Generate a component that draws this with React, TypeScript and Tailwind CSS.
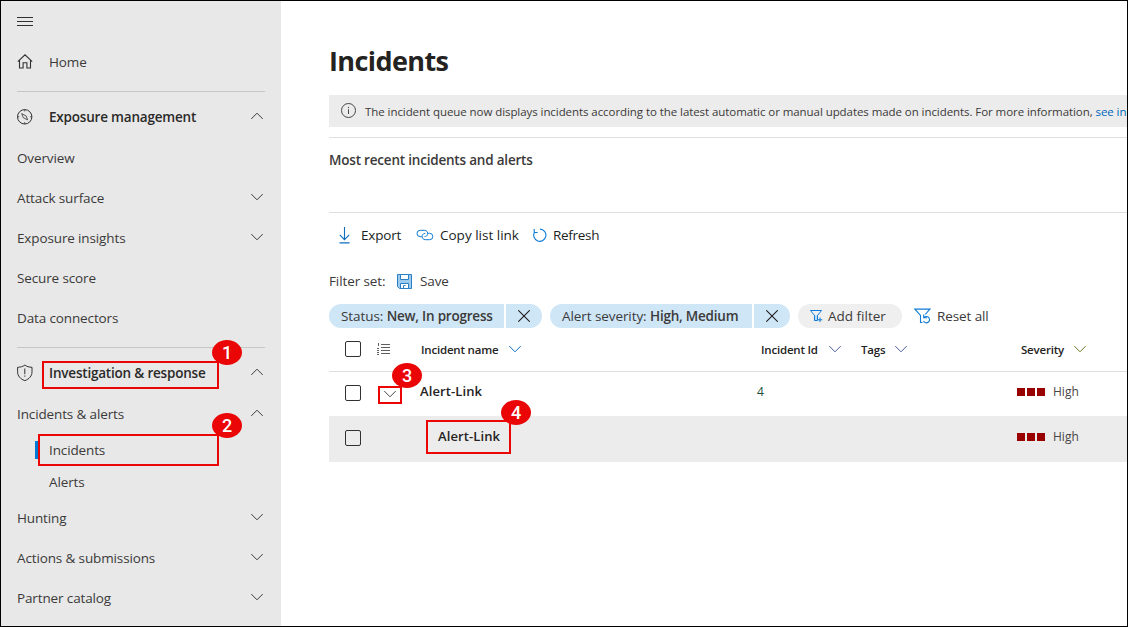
import type { ReactNode } from "react";

function Chevron({ up = false, className = "" }: { up?: boolean; className?: string }) {
  return (
    <svg width="12" height="8" viewBox="0 0 12 8" fill="none" stroke="currentColor" className={`shrink-0 ${className}`}>
      <path d={up ? "M0.3 6.9 6 1.2l5.7 5.7" : "M0.3 1.1 6 6.8l5.7-5.7"} />
    </svg>
  );
}

type NavRowProps = { label: string; chevron?: "up" | "down"; icon?: ReactNode; bold?: boolean };

function NavRow({ label, chevron, icon, bold }: NavRowProps) {
  return (
    <div className="flex h-10 shrink-0 items-center pr-[18px] pl-4">
      {icon && <span className="flex w-8 shrink-0 pb-px">{icon}</span>}
      <span className={`flex-1 ${bold ? "font-semibold tracking-[-0.2px] text-[#2b2a29]" : ""}`}>{label}</span>
      {chevron && <Chevron up={chevron === "up"} className="relative -top-px" />}
    </div>
  );
}

function Rule() {
  return <div className="mt-[9px] mr-4 mb-[5px] ml-4 h-px shrink-0 bg-[#c8c6c4]" />;
}

function HomeIcon() {
  return (
    <svg width="16" height="16" viewBox="0 0 16 16" fill="none" stroke="#323130" strokeWidth="1.1">
      <path d="M0.8 7.600 8 0.800 15.200 7.600M2.500 6.200v7.800h3.600V8.800h3.800v5.200h3.600V6.200" />
    </svg>
  );
}

function CompassIcon() {
  return (
    <svg width="16" height="16" viewBox="0 0 16 16" fill="none" stroke="#323130">
      <circle cx="7.7" cy="7.8" r="7.2" />
      <path d="M4.700 4.600l4.500 2.400 1.400 3.900-4.400-2.300z" strokeWidth="0.8" />
      <path d="M7.7 0.6v1.8M7.7 13.2V15M0.5 7.8h1.8M13.1 7.8h1.8" strokeWidth="0.8" />
    </svg>
  );
}

function ShieldIcon() {
  return (
    <svg width="16" height="18" viewBox="0 0 16 18" fill="none" stroke="#323130">
      <path d="M7.8 1.1C6 2.5 3.500 3.200 0.600 3.300v4.500c0 4.200 2.700 7.100 7.200 8.900 4.500-1.800 7.200-4.700 7.200-8.900V3.300C12.100 3.200 9.600 2.500 7.800 1.100z" />
      <path d="M7.800 4.500v5.700M7.800 11.500v1.200" />
    </svg>
  );
}

function Badge({ n, className }: { n: number; className: string }) {
  return (
    <span className={`absolute flex h-[25px] w-[30px] items-center justify-center rounded-[50%] bg-[#ea0606] font-['Roboto','Liberation_Sans',sans-serif] text-[18px] leading-none font-medium text-white ${className}`}>
      {n}
    </span>
  );
}

function Frame({ className }: { className: string }) {
  return <span className={`absolute border-2 border-[#ea0606] ${className}`} />;
}

function Checkbox() {
  return <span className="ml-4 block size-4 rounded-[2px] border border-[#323130] bg-white" />;
}

function Severity() {
  return (
    <div className="flex items-center pb-0.5">
      <span className="flex gap-0.5">
        <i className="size-2 bg-[#990000]" />
        <i className="size-2 bg-[#990000]" />
        <i className="size-2 bg-[#990000]" />
      </span>
      <span className="ml-2 text-[12px] text-[#484644]">High</span>
    </div>
  );
}

function FilterPill({ name, value, width }: { name: string; value: string; width: string }) {
  return (
    <div className="mr-2 flex h-6 gap-0.5">
      <div className={`flex items-center rounded-l-full bg-[#cfe6f7] pl-3 whitespace-pre ${width}`}>
        <span className="tracking-[-0.08px]">{name} </span>
        <b className="font-semibold tracking-[-0.22px]">{value}</b>
      </div>
      <div className="flex w-9 items-center justify-center rounded-r-full bg-[#cfe6f7]">
        <svg width="12" height="12" viewBox="0 0 12 12" stroke="#201f1e" strokeWidth="1.100">
          <path d="M0.300 0.300l11.400 11.400M11.700 0.300L0.300 11.700" />
        </svg>
      </div>
    </div>
  );
}

function Sidebar() {
  return (
    <nav className="flex w-[280px] shrink-0 flex-col bg-[#e8e8e8] tracking-[-0.13px]">
      <div className="flex h-[41px] shrink-0 items-center pl-4">
        <svg width="16" height="9" viewBox="0 0 16 9" stroke="#323130" shapeRendering="crispEdges">
          <path d="M0 0.500h16M0 4.500h16M0 8.500h16" />
        </svg>
      </div>
      <NavRow label="Home" icon={<HomeIcon />} />
      <Rule />
      <NavRow label="Exposure management" icon={<CompassIcon />} chevron="up" bold />
      <div className="mt-px flex flex-col">
        <NavRow label="Overview" />
        <NavRow label="Attack surface" chevron="down" />
        <NavRow label="Exposure insights" chevron="down" />
        <NavRow label="Secure score" />
        <NavRow label="Data connectors" />
      </div>
      <Rule />
      <NavRow label="Investigation & response" icon={<ShieldIcon />} chevron="up" bold />
      <div className="mt-px flex flex-col">
        <NavRow label="Incidents & alerts" chevron="up" />
        <div className="flex h-8 items-center pl-[34px]">
          <span className="mr-[11px] h-[18px] w-[3px] bg-[#0078d4]" />
          Incidents
        </div>
        <div className="flex h-8 items-center pl-12">Alerts</div>
        <NavRow label="Hunting" chevron="down" />
        <NavRow label="Actions & submissions" chevron="down" />
        <NavRow label="Partner catalog" chevron="down" />
      </div>
    </nav>
  );
}

function Toolbar() {
  return (
    <div className="flex h-[45px] items-center pb-px pl-2 tracking-[-0.2px] text-[#201f1e]">
      <svg width="14" height="17" viewBox="0 0 14 17" fill="none" stroke="#0f6cbd" strokeWidth="1.100">
        <path d="M7.500 0v12.500M2.800 7.900l4.700 4.700 4.700-4.700M2.500 15.900h10" />
      </svg>
      <span className="ml-[10px] w-[55px]">Export</span>
      <svg width="18" height="14" viewBox="0 0 18 14" fill="none" stroke="#0f7bd4">
        <path d="M5.800 8.700H4.200a3.200 3.200 0 0 1 0-6.400h4.300a3.200 3.200 0 0 1 3.100 4.100c-.4 1.300-1.500 2.200-3.100 2.200" />
        <path d="M12.200 5.300h1.400a3.200 3.200 0 0 1 0 6.400H9.300a3.200 3.200 0 0 1-3.100-4.100c.4-1.300 1.500-2.200 3.100-2.200" />
      </svg>
      <span className="ml-1.5 w-[93px] tracking-normal">Copy list link</span>
      <svg width="14" height="14" viewBox="0 0 14 14" fill="none" stroke="#0f7bd4" strokeWidth="1.100">
        <path d="M1.200 1v3.500h3.500M1.500 4.200A6.100 6.100 0 1 0 7 1.100" />
      </svg>
      <span className="ml-1.5 tracking-[-0.3px]">Refresh</span>
    </div>
  );
}

function Filters() {
  return (
    <>
      <div className="flex h-[46px] items-center tracking-[-0.1px]">
        <span className="w-[68px]">Filter set:</span>
        <svg width="15" height="15" viewBox="0 0 15 15" fill="none" stroke="#2b7fc4">
          <path d="M0.500 0.500h14v14H2.500l-2-2z" fill="#9ccbee" />
          <path d="M3.500 0.500h8v5h-8z" fill="#fff" />
          <path d="M3.500 14.500V9.500h8v5z" fill="#fff" />
          <path d="M6.500 14v-2.500h2" />
        </svg>
        <span className="ml-2">Save</span>
      </div>
      <div className="flex h-6 items-center">
        <FilterPill name="Status:" value="New, In progress" width="w-[175px]" />
        <FilterPill name="Alert severity:" value="High, Medium" width="w-[202px]" />
        <div className="flex h-6 w-[104px] items-center rounded-full bg-[#efefef] pl-3">
          <svg width="13" height="12" viewBox="0 0 13 12" fill="none" stroke="#0f7bd4">
            <path d="M0.500 0.500h11L7.500 5.500v5h-3v-5z" fill="#b5d8f3" />
            <path d="M1.500 1h9L7 5H5z" fill="#efefef" stroke="none" />
            <path d="M10 7.500v4.500M7.800 9.800h4.500" />
          </svg>
          <span className="ml-[5px]">Add filter</span>
        </div>
        <svg width="17" height="17" viewBox="0 0 17 17" fill="none" stroke="#0f7bd4" strokeWidth="1.100" className="ml-3">
          <path d="M8.500 14.500H6.500V7.500L0.900 1.100h15L11.200 6.500" />
          <path d="M9.700 6.500v3.200h3.200M10 9.500a3.200 3.200 0 1 1-.5 3.500" />
        </svg>
        <span className="ml-1.5 tracking-[-0.1px]">Reset all</span>
      </div>
    </>
  );
}

function IncidentTable() {
  return (
    <div className="text-[#242322]">
      <div className="grid h-[44px] grid-cols-[48px_44px_340px_100px_160px_1fr] items-center border-b border-[#e1dfdd] text-[11.500px] font-semibold tracking-[-0.2px]">
        <span className="pb-px">
          <Checkbox />
        </span>
        <svg width="13" height="12" viewBox="0 0 13 12" stroke="#605e5c" shapeRendering="crispEdges" className="relative -top-px">
          <path d="M4 1.500h9M4 4.500h9M4 7.500h9M4 10.500h9M1.500 0v3M0 5.500h2M0 7.500h2M0 9.500h2M0 11.500h2" />
        </svg>
        <span className="flex items-center">
          <span className="w-[88px]">Incident name</span>
          <Chevron className="relative -top-px text-[#0f6cbd]" />
        </span>
        <span className="flex items-center">
          <span className="w-[68px]">Incident Id</span>
          <Chevron className="relative -top-px text-[#4a5a9a]" />
        </span>
        <span className="flex items-center">
          <span className="w-[34px]">Tags</span>
          <Chevron className="relative -top-px text-[#4a5a9a]" />
        </span>
        <span className="flex items-center">
          <span className="w-[53px]">Severity</span>
          <Chevron className="relative -top-px text-[#6b7a1e]" />
        </span>
      </div>
      <div className="grid h-[44px] grid-cols-[48px_43px_337px_260px_1fr] items-center pb-0.5">
        <Checkbox />
        <Chevron className="relative top-px ml-[7px] text-[#484644]" />
        <span className="pb-1 text-[13px] font-semibold tracking-[0.1px]">Alert-Link</span>
        <span className="pb-0.5 text-[12px] text-[#1d4f38]">4</span>
        <Severity />
      </div>
      <div className="grid h-[46px] grid-cols-[109px_579px_1fr] items-center bg-[#ececec] pb-0.5">
        <span className="[&>span]:bg-transparent">
          <Checkbox />
        </span>
        <span className="pb-1 text-[13px] font-semibold tracking-[0.1px]">Alert-Link</span>
        <Severity />
      </div>
    </div>
  );
}

export default function App() {
  return (
    <div className="relative flex h-[627px] w-[1128px] overflow-hidden border border-black bg-white font-['Open_Sans','Noto_Sans',sans-serif] text-[13.500px] leading-5 whitespace-nowrap text-[#3b3a39]">
      <Sidebar />
      <main className="flex min-w-0 flex-1 flex-col overflow-hidden pl-12">
        <h1 className="flex h-[94px] items-center pt-[26px] text-[27px] font-bold tracking-[-0.6px] text-[#242322]">Incidents</h1>
        <div className="flex h-8 shrink-0 items-center bg-[#ececec] pl-3 text-[11.500px]">
          <svg width="15" height="15" viewBox="0 0 15 15" fill="none" stroke="#484644" className="relative -top-px shrink-0">
            <circle cx="7.500" cy="7.500" r="7" />
            <path d="M7.500 6.300v4.700M7.500 3.900v1.200" />
          </svg>
          <span className="relative top-px ml-[9px] tracking-[-0.068px]">
            The incident queue now displays incidents according to the latest automatic or manual updates made on incidents. For more information,{" "}
            <a className="text-[#0067b8]">see in</a>
          </span>
        </div>
        <div className="mt-[10px] h-px shrink-0 bg-[#e1dfdd]" />
        <h2 className="flex h-[74px] shrink-0 items-start pt-3 text-[13.500px] font-semibold tracking-[-0.2px]">Most recent incidents and alerts</h2>
        <div className="h-px shrink-0 bg-[#e1dfdd]" />
        <Toolbar />
        <Filters />
        <IncidentTable />
      </main>

      <Frame className="top-[360px] left-[41px] h-[28px] w-[177px]" />
      <Frame className="top-[433px] left-[37px] h-[32px] w-[181px]" />
      <Frame className="top-[385px] left-[377px] h-[18px] w-[24px]" />
      <Frame className="top-[419px] left-[425px] h-[34px] w-[85px]" />
      <Badge n={1} className="top-[339px] left-[211px]" />
      <Badge n={2} className="top-[412px] left-[211px]" />
      <Badge n={3} className="top-[362px] left-[391px]" />
      <Badge n={4} className="top-[399px] left-[500px]" />
    </div>
  );
}
